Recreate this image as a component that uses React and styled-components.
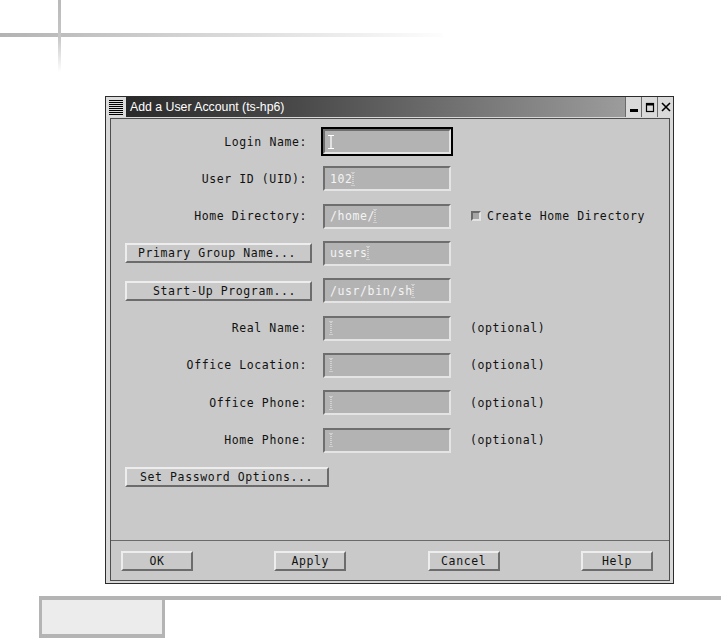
import React from 'react';
import styled, { createGlobalStyle } from 'styled-components';

const GlobalStyle = createGlobalStyle`
  html, body { margin: 0; padding: 0; background: #ffffff; }
  body { width: 721px; height: 638px; overflow: hidden; font-family: "DejaVu Sans Mono", "Liberation Mono", monospace; }
`;

const Page = styled.div`
  width: 721px;
  height: 638px;
  display: flex;
  flex-direction: column;
  background: #ffffff;
`;

const Header = styled.div`
  height: 96px;
  flex: none;
  background:
    linear-gradient(to bottom, #b9b9b9 0, #c6c6c6 37px, rgba(255,255,255,0) 72px) 58px 0 / 3px 72px no-repeat,
    linear-gradient(to right, #b3b3b3 0, #cdcdcd 150px, #e6e6e6 300px, #fdfdfd 443px) 0 33px / 443px 4px no-repeat;
`;

const Stage = styled.div`
  flex: none;
  padding-left: 105px;
`;

const Window = styled.div`
  width: 569px;
  height: 488px;
  box-sizing: border-box;
  border: 1px solid #2c2c2c;
  background: #d8d8d8;
  display: flex;
  flex-direction: column;
`;

const TitleRow = styled.div`
  height: 20px;
  flex: none;
  display: flex;
`;

const MenuBox = styled.div`
  width: 20px;
  flex: none;
  display: flex;
  align-items: center;
  justify-content: center;
  background: #dcdcdc;
`;

const TitleBar = styled.div`
  flex: 1;
  display: flex;
  align-items: center;
  padding-left: 4px;
  background: linear-gradient(to right, #2a2a2a 0%, #4a4a4a 35%, #9c9c9c 100%);
  color: #ffffff;
  font-family: "Liberation Sans", Arial, sans-serif;
  font-size: 12.3px;
  white-space: nowrap;
`;

const WinButton = styled.div`
  width: 16px;
  flex: none;
  box-sizing: border-box;
  border-left: 1px solid #6a6a6a;
  background: #dadada;
  display: flex;
  align-items: center;
  justify-content: center;
`;

const Frame = styled.div`
  flex: 1;
  display: flex;
  padding: 1px 3px 2px 4px;
`;

const Body = styled.div`
  flex: 1;
  display: flex;
  flex-direction: column;
  border: 1px solid #4e4e4e;
  background: #c9c9c9;
`;

const Form = styled.div`
  display: grid;
  grid-template-columns: 187px 128px auto;
  grid-auto-rows: 25px;
  column-gap: 11px;
  row-gap: 12.33px;
  align-items: center;
  padding: 10px 0 0 14px;
`;

const monoText = `
  font-size: 11.5px;
  letter-spacing: 0.6px;
  color: #111111;
  white-space: pre;
`;

const Label = styled.div`
  ${monoText}
  text-align: right;
  padding-right: 5px;
`;

const Field = styled.div`
  ${monoText}
  width: 128px;
  height: 25px;
  box-sizing: border-box;
  border: 2px solid;
  border-color: #6e6e6e #e4e4e4 #e4e4e4 #6e6e6e;
  background: #b3b3b3;
  display: flex;
  align-items: center;
  padding-left: ${p => (p.$value ? 5 : 3)}px;
  color: #f4f4f4;
  outline: ${p => (p.$focused ? '2px solid #000000' : 'none')};
`;

const CursorWrap = styled.span`
  display: inline-flex;
  margin-left: ${p => (p.$after ? -3 : 0)}px;
`;

const Button = styled.div`
  ${monoText}
  height: 20px;
  box-sizing: border-box;
  border: 2px solid;
  border-color: #ededed #6c6c6c #6c6c6c #ededed;
  background: #c9c9c9;
  display: flex;
  align-items: center;
  justify-content: ${p => p.$align || 'center'};
  justify-self: start;
  width: ${p => (p.$width ? `${p.$width}px` : 'auto')};
  padding: ${p => p.$pad || '0'};
`;

const Extra = styled.div`
  ${monoText}
  margin-left: 8px;
  display: flex;
  align-items: center;
  gap: 6px;
`;

const CheckBox = styled.span`
  width: 10px;
  height: 10px;
  box-sizing: border-box;
  border: 2px solid;
  border-color: #6a6a6a #e2e2e2 #e2e2e2 #6a6a6a;
  background: #a6a6a6;
  margin-left: 1px;
`;

const Spacer = styled.div`
  flex: 1;
`;

const ButtonBar = styled.div`
  border-top: 1px solid #6a6a6a;
  padding: 10px 16px 9px 10px;
  display: flex;
  justify-content: space-between;
`;

const Footer = styled.div`
  margin-top: 12px;
  padding-left: 39px;
  height: 42px;
  display: flex;
`;

const Tab = styled.div`
  width: 126px;
  box-sizing: border-box;
  border-style: solid;
  border-color: #b4b4b4;
  border-width: 4px 3px 4px 3px;
  background: #ececec;
`;

const Rule = styled.div`
  flex: 1;
  height: 4px;
  background: #b4b4b4;
`;

const MenuIcon = () => (
  <svg width="14" height="16" viewBox="0 0 14 16">
    {[0, 1, 2, 3, 4, 5, 6, 7].map(i => (
      <rect key={i} x="0" y={1 + i * 2} width="14" height="1" fill="#000" />
    ))}
  </svg>
);

const MinIcon = () => (
  <svg width="10" height="12" viewBox="0 0 10 12">
    <rect x="1" y="8" width="8" height="3" fill="#000" />
  </svg>
);

const MaxIcon = () => (
  <svg width="10" height="12" viewBox="0 0 10 12">
    <rect x="1.5" y="2.5" width="7" height="8" fill="none" stroke="#000" strokeWidth="1.2" />
    <rect x="1" y="2" width="8" height="2.5" fill="#000" />
  </svg>
);

const CloseIcon = () => (
  <svg width="10" height="12" viewBox="0 0 10 12">
    <path d="M1 2 L9 10 M9 2 L1 10" stroke="#000" strokeWidth="1.6" />
  </svg>
);

const Cursor = ({ focused }) => (
  <svg width="6" height="14" viewBox="0 0 6 14">
    {focused ? (
      <path d="M0 0.5h6 M3 0.5v13 M0 13.5h6" stroke="#ffffff" strokeWidth="1.2" fill="none" />
    ) : (
      <>
        <path d="M3 1v12" stroke="#f2f2f2" strokeWidth="1" strokeDasharray="1 1" />
        <path d="M1.5 0.5h3 M1.5 13.5h3" stroke="#e8e8e8" strokeWidth="1" strokeDasharray="1 1" />
      </>
    )}
  </svg>
);

const rows = [
  { label: 'Login Name:', value: '', focused: true },
  { label: 'User ID (UID):', value: '102' },
  { label: 'Home Directory:', value: '/home/', check: 'Create Home Directory' },
  { button: 'Primary Group Name...', value: 'users' },
  { button: 'Start-Up Program...', value: '/usr/bin/sh' },
  { label: 'Real Name:', value: '', note: '(optional)' },
  { label: 'Office Location:', value: '', note: '(optional)' },
  { label: 'Office Phone:', value: '', note: '(optional)' },
  { label: 'Home Phone:', value: '', note: '(optional)' },
];

export default function App() {
  return (
    <Page>
      <GlobalStyle />
      <Header />
      <Stage>
        <Window>
          <TitleRow>
            <MenuBox><MenuIcon /></MenuBox>
            <TitleBar>Add a User Account (ts-hp6)</TitleBar>
            <WinButton><MinIcon /></WinButton>
            <WinButton><MaxIcon /></WinButton>
            <WinButton><CloseIcon /></WinButton>
          </TitleRow>
          <Frame>
            <Body>
              <Form>
                {rows.map((r, i) => (
                  <React.Fragment key={i}>
                    {r.button ? (
                      <Button $width={187} $align="flex-end" $pad="0 14px 0 0">{r.button}</Button>
                    ) : (
                      <Label>{r.label}</Label>
                    )}
                    <Field $focused={r.focused} $value={!!r.value}>
                      {r.value}
                      <CursorWrap $after={!!r.value}><Cursor focused={r.focused} /></CursorWrap>
                    </Field>
                    {r.check ? (
                      <Extra><CheckBox />{r.check}</Extra>
                    ) : r.note ? (
                      <Extra>{r.note}</Extra>
                    ) : (
                      <span />
                    )}
                  </React.Fragment>
                ))}
                <Button $pad="0 14px 0 13px">Set Password Options...</Button>
              </Form>
              <Spacer />
              <ButtonBar>
                <Button $width={72}>OK</Button>
                <Button $width={72}>Apply</Button>
                <Button $width={72}>Cancel</Button>
                <Button $width={72}>Help</Button>
              </ButtonBar>
            </Body>
          </Frame>
        </Window>
      </Stage>
      <Footer>
        <Tab />
        <Rule />
      </Footer>
    </Page>
  );
}
